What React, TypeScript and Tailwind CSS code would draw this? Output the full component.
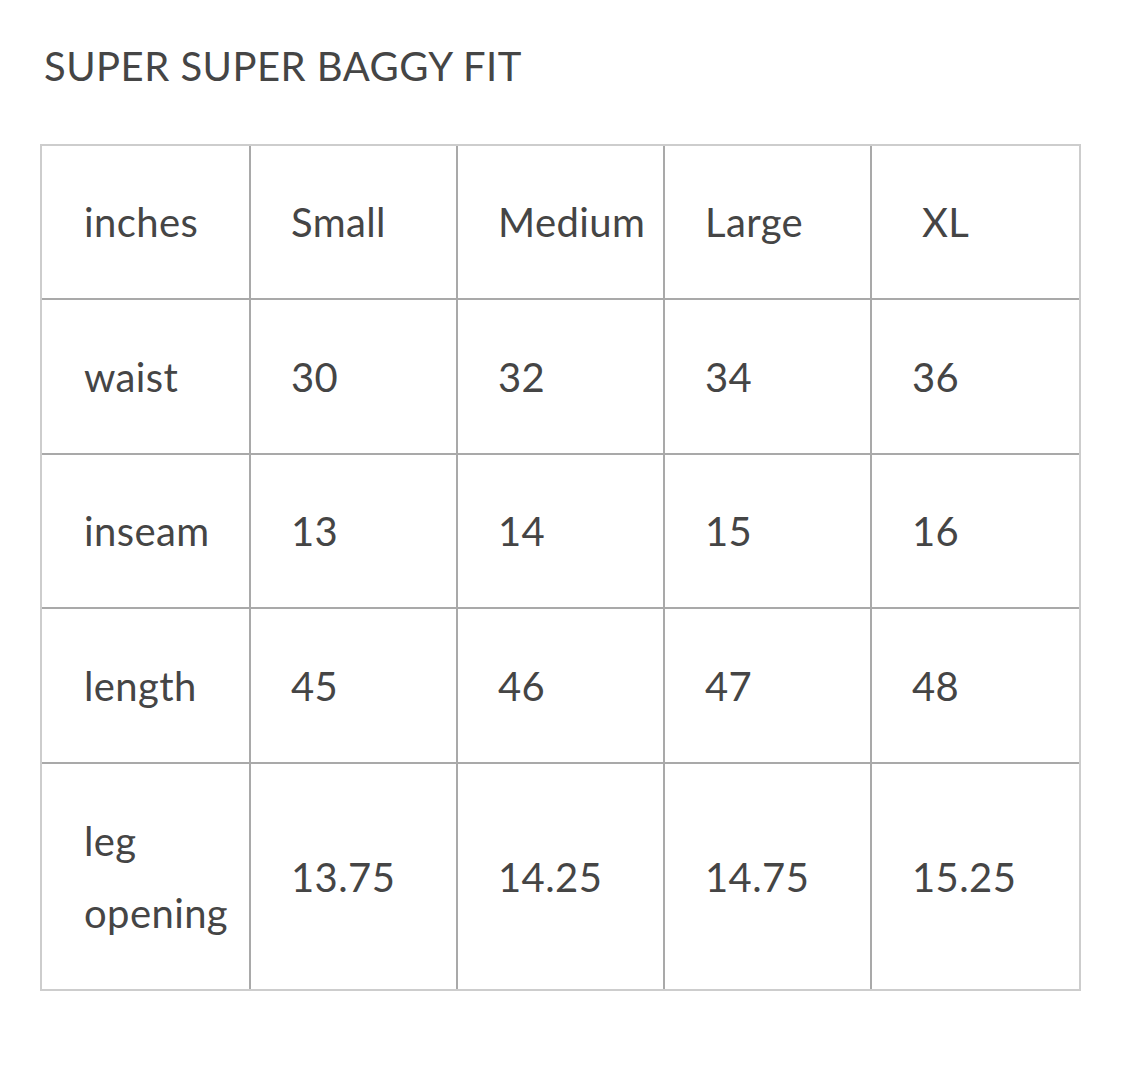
const rows: string[][] = [
  ["inches", "Small", "Medium", "Large", "XL"],
  ["waist", "30", "32", "34", "36"],
  ["inseam", "13", "14", "15", "16"],
  ["length", "45", "46", "47", "48"],
  ["leg opening", "13.75", "14.25", "14.75", "15.25"],
];

// heights include the 2px bottom rule (border-box)
const heights = ["h-[154px]", "h-[155px]", "h-[154px]", "h-[155px]", "h-[225px]"];

export default function App() {
  return (
    <div className="min-h-[1080px] w-[1121px] bg-white text-[#454545] font-['Lato',sans-serif]">
      <h1 className="pt-[42px] pl-[44px] text-[40px] leading-[48px] tracking-[0.012em] font-normal">
        SUPER SUPER BAGGY FIT
      </h1>
      <div className="ml-[40px] mt-[54px] w-[1041px] border-2 border-[#cdcdcd]">
        {rows.map((row, r) => (
          <div key={r} className="flex">
            {row.map((cell, c) => (
              <div
                key={c}
                className={
                  "flex shrink-0 items-center pr-2 text-[40px] leading-[72px] tracking-[0.01em] w-[207px] " +
                  heights[r] +
                  (c === 0 ? " w-[209px]" : "") +
                  (c < 4 ? " border-r-2 border-[#a9a9a9]" : "") +
                  (r < 4 ? " border-b-2 border-b-[#a9a9a9]" : "") +
                  (c === 0 ? " pl-[42px]" : r === 0 && c === 4 ? " pl-[50px]" : " pl-[40px]")
                }
              >
                {cell}
              </div>
            ))}
          </div>
        ))}
      </div>
    </div>
  );
}
